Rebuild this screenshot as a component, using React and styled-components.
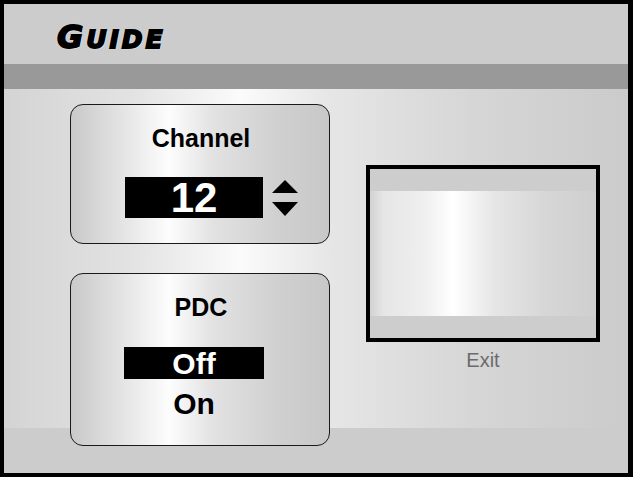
import styled, { createGlobalStyle } from "styled-components"

const GlobalStyle = createGlobalStyle`
    html, body {
        margin: 0;
        padding: 0;
        background: #000;
    }
    body {
        font-family: "Liberation Sans", Arial, sans-serif;
    }
`

export default function App () {
    const pdcOptions = [
        { label: "Off", selected: true },
        { label: "On", selected: false },
    ]

    return (
        <Screen>
            <GlobalStyle/>
            <Header>
                <Title>G<small>UIDE</small></Title>
            </Header>
            <Bar/>
            <Main>
                <LeftColumn>
                    <Panel height={140}>
                        <Label>Channel</Label>
                        <ValueRow>
                            <ValueBox>12</ValueBox>
                            <Arrows width="26" height="36" viewBox="0 0 26 36">
                                <polygon points="0,13 13,0 26,13" fill="#000"/>
                                <polygon points="0,22 26,22 13,36" fill="#000"/>
                            </Arrows>
                        </ValueRow>
                    </Panel>
                    <Panel height={173}>
                        <Label>PDC</Label>
                        <Options>
                            {pdcOptions.map(op =>
                                <Option key={op.label} selected={op.selected}>{op.label}</Option>
                            )}
                        </Options>
                    </Panel>
                </LeftColumn>
                <RightColumn>
                    <Monitor>
                        <Strip/>
                        <Band/>
                        <Strip/>
                    </Monitor>
                    <ExitText>Exit</ExitText>
                </RightColumn>
            </Main>
        </Screen>
    )
}

const Screen = styled.div`
    width: 633px;
    height: 477px;
    box-sizing: border-box;
    border-style: solid;
    border-color: #000;
    border-width: 4px 5px 4px 4px;
    display: flex;
    flex-direction: column;
    background-color: #cccccc;
    overflow: hidden;
`

const Header = styled.div`
    height: 60px;
    flex-shrink: 0;
    box-sizing: border-box;
    display: flex;
    align-items: flex-end;
    padding: 0 0 9px 53px;
    background-color: #cccccc;
`

const Title = styled.h1`
    margin: 0;
    font-family: "DejaVu Sans", sans-serif;
    font-weight: bold;
    font-style: oblique;
    font-size: 32px;
    line-height: 30px;
    letter-spacing: 3px;
    color: #000;
    -webkit-text-stroke: 1.8px #000;
    text-shadow: 0 0 2px #fff, 1px 1px 1px #fff, -1px 0 1px #eee;

    small {
        font-size: 25px;
    }
`

const Bar = styled.div`
    height: 25px;
    flex-shrink: 0;
    background-color: #999999;
`

const Main = styled.div`
    flex: 1;
    display: flex;
    gap: 36px;
    padding: 15px 0 0 66px;
    background-color: #cccccc;
    background-image: linear-gradient(90deg, #d4d4d4 0%, #e2e2e2 20%, #fbfbfb 38%, #e6e6e6 52%, #d6d6d6 75%, #cbcbcb 100%);
    background-size: 100% 339px;
    background-repeat: no-repeat;
`

const LeftColumn = styled.div`
    display: flex;
    flex-direction: column;
    gap: 29px;
`

const Panel = styled.div`
    width: 260px;
    height: ${props => props.height}px;
    box-sizing: border-box;
    border: 1.5px solid #1a1a1a;
    border-radius: 13px;
    display: flex;
    flex-direction: column;
    padding-top: 18px;
    background: linear-gradient(90deg, #c9c9c9 0%, #e4e4e4 20%, #fdfdfd 38%, #e2e2e2 55%, #d0d0d0 80%, #c8c8c8 100%);
`

const Label = styled.div`
    font-size: 25px;
    font-weight: bold;
    line-height: 30px;
    text-align: center;
    padding-left: 2px;
    color: #000;
`

const ValueRow = styled.div`
    display: flex;
    align-items: center;
    gap: 9px;
    margin-top: 24px;
    padding-left: 54px;
`

const ValueBox = styled.div`
    width: 138px;
    height: 41px;
    background-color: #000;
    color: #fff;
    font-size: 42px;
    font-weight: bold;
    line-height: 41px;
    text-align: center;
`

const Arrows = styled.svg`
    display: block;
`

const Options = styled.div`
    display: flex;
    flex-direction: column;
    gap: 8px;
    margin-top: 25px;
    padding-left: 53px;
`

const Option = styled.div`
    width: 140px;
    height: 32px;
    background-color: ${props => props.selected ? "#000" : "transparent"};
    color: ${props => props.selected ? "#fff" : "#000"};
    font-size: 30px;
    font-weight: bold;
    line-height: 34px;
    text-align: center;
`

const RightColumn = styled.div`
    display: flex;
    flex-direction: column;
    align-items: center;
    padding-top: 61px;
`

const Monitor = styled.div`
    width: 234px;
    height: 177px;
    box-sizing: border-box;
    border: 4px solid #000;
    display: flex;
    flex-direction: column;
    background-color: #cdcdcd;
`

const Strip = styled.div`
    height: 22px;
    background-color: #cdcdcd;
`

const Band = styled.div`
    flex: 1;
    background: linear-gradient(90deg, #d2d2d2 0%, #e6e6e6 6%, #efefef 24%, #ffffff 37%, #e6e6e6 55%, #d6d6d6 78%, #cfcfcf 100%);
`

const ExitText = styled.div`
    margin-top: 6px;
    font-size: 20px;
    line-height: 24px;
    color: #6b6b6b;
`
